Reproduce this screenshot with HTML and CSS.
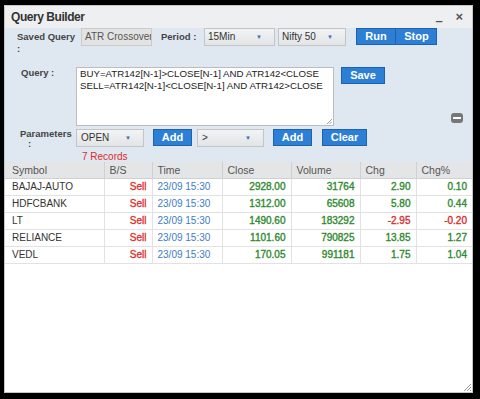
FILE: index.html
```html
<!DOCTYPE html>
<html>
<head>
<meta charset="utf-8">
<link rel="stylesheet" href="styles.css">
</head>
<body>
<div class="window">
  <div class="titlebar">
    <span class="title">Query Builder</span>
    <span class="tb-min">–</span>
    <span class="tb-close">×</span>
  </div>
  <div class="form">
    <div class="row row1">
      <div class="label lbl-saved">Saved Query<br>:</div>
      <div class="input-ro">ATR Crossover</div>
      <div class="label lbl-period">Period :</div>
      <div class="select s-period">15Min<span class="arrow">▼</span></div>
      <div class="select s-index">Nifty 50<span class="arrow">▼</span></div>
      <div class="btn-group">
        <button class="btn btn-run">Run</button><button class="btn btn-stop">Stop</button>
      </div>
    </div>
    <div class="row row-query">
      <div class="label lbl-query">Query :</div>
      <div class="textarea">BUY=ATR142[N-1]&gt;CLOSE[N-1] AND ATR142&lt;CLOSE<br>SELL=ATR142[N-1]&lt;CLOSE[N-1] AND ATR142&gt;CLOSE
        <svg class="ta-grip" width="5" height="5" viewBox="0 0 5 5"><path d="M5 0 L0 5 M5 2.5 L2.5 5" stroke="#888" stroke-width="0.8"/></svg>
      </div>
      <button class="btn btn-save">Save</button>
      <span class="collapse"><span class="collapse-bar"></span></span>
    </div>
    <div class="row row-params">
      <div class="label lbl-params">Parameters<br><span class="colon">:</span></div>
      <div class="select s-field">OPEN<span class="arrow">▼</span></div>
      <button class="btn btn-add">Add</button>
      <div class="select s-op">&gt;<span class="arrow">▼</span></div>
      <button class="btn btn-add2">Add</button>
      <button class="btn btn-clear">Clear</button>
    </div>
    <div class="records">7 Records</div>
  </div>
  <div class="grid">
    <table>
      <colgroup>
        <col class="c-sym"><col class="c-bs"><col class="c-time"><col class="c-close"><col class="c-vol"><col class="c-chg"><col class="c-pct">
      </colgroup>
      <thead>
        <tr><th>Symbol</th><th>B/S</th><th>Time</th><th>Close</th><th>Volume</th><th>Chg</th><th>Chg%</th></tr>
      </thead>
      <tbody>
        <tr><td class="sym">BAJAJ-AUTO</td><td class="bs">Sell</td><td class="time">23/09 15:30</td><td class="num up">2928.00</td><td class="num up">31764</td><td class="num up">2.90</td><td class="num up">0.10</td></tr>
        <tr><td class="sym">HDFCBANK</td><td class="bs">Sell</td><td class="time">23/09 15:30</td><td class="num up">1312.00</td><td class="num up">65608</td><td class="num up">5.80</td><td class="num up">0.44</td></tr>
        <tr><td class="sym">LT</td><td class="bs">Sell</td><td class="time">23/09 15:30</td><td class="num up">1490.60</td><td class="num up">183292</td><td class="num down">-2.95</td><td class="num down">-0.20</td></tr>
        <tr><td class="sym">RELIANCE</td><td class="bs">Sell</td><td class="time">23/09 15:30</td><td class="num up">1101.60</td><td class="num up">790825</td><td class="num up">13.85</td><td class="num up">1.27</td></tr>
        <tr><td class="sym">VEDL</td><td class="bs">Sell</td><td class="time">23/09 15:30</td><td class="num up">170.05</td><td class="num up">991181</td><td class="num up">1.75</td><td class="num up">1.04</td></tr>
      </tbody>
    </table>
    <svg class="win-grip" width="8" height="8" viewBox="0 0 8 8"><path d="M8 1 L1 8 M8 4 L4 8 M8 7 L7 8" stroke="#999" stroke-width="1"/></svg>
  </div>
</div>
</body>
</html>
```

FILE: styles.css
```css
html, body {
  margin: 0;
  padding: 0;
}
body {
  background: #000;
  width: 480px;
  height: 399px;
  overflow: hidden;
  font-family: "Liberation Sans", Arial, sans-serif;
  font-size: 10px;
  color: #333;
}
.window {
  margin: 5px 0 0 4px;
  width: 469px;
  height: 388px;
  box-sizing: border-box;
  border: 1px solid #c6c6c6;
  background: #fff;
  display: flex;
  flex-direction: column;
  position: relative;
}
.titlebar {
  height: 22px;
  background: #eeeff1;
  display: flex;
  align-items: center;
  padding-left: 6px;
  flex: none;
}
.title {
  font-size: 12px;
  font-weight: bold;
  letter-spacing: -0.45px;
  color: #333;
  flex: 1;
}
.tb-min {
  font-size: 13px;
  font-weight: bold;
  color: #555;
  margin-top: 6px;
  width: 10px;
}
.tb-close {
  font-size: 13px;
  font-weight: bold;
  color: #555;
  margin-left: 10px;
  margin-right: 9px;
  margin-top: -2px;
}
.form {
  background: #dfe8f1;
  padding-left: 12px;
  flex: none;
}
.row {
  display: flex;
  align-items: flex-start;
}
.label {
  color: #444;
  font-weight: bold;
  font-size: 9.5px;
  line-height: 12px;
}
.lbl-saved {
  width: 64px;
  padding-top: 3px;
}
.input-ro {
  width: 71px;
  height: 18px;
  box-sizing: border-box;
  background: #e3e3e3;
  border: 1px solid #cbcbcb;
  color: #555;
  font-size: 10px;
  line-height: 16px;
  padding-left: 3px;
  white-space: nowrap;
  overflow: hidden;
}
.lbl-period {
  width: 43px;
  margin-left: 9px;
  padding-top: 3px;
}
.select {
  height: 18px;
  box-sizing: border-box;
  background: linear-gradient(#f2f3f4, #e2e4e6);
  border: 1px solid #c2c4c6;
  color: #333;
  font-size: 10px;
  line-height: 16px;
  padding-left: 3px;
  position: relative;
}
.arrow {
  position: absolute;
  right: 12px;
  top: 0;
  font-size: 6px;
  color: #3a6fb0;
}
.s-period { width: 71px; }
.s-index { width: 68px; margin-left: 3px; }
.btn-group {
  display: flex;
  margin-left: 10px;
}
.btn {
  height: 17px;
  box-sizing: border-box;
  background: #2c7fd5;
  border: 1px solid #1d62ad;
  color: #fff;
  font-family: "Liberation Sans", Arial, sans-serif;
  font-size: 11px;
  font-weight: bold;
  line-height: 15px;
  padding: 0;
  text-align: center;
}
.btn-run { width: 40px; }
.btn-stop { width: 41px; border-left-color: #2c7fd5; }
.row-query {
  margin-top: 12px;
}
.lbl-query {
  width: 55px;
  padding-left: 4px;
}
.textarea {
  width: 258px;
  height: 59px;
  box-sizing: border-box;
  background: #fff;
  border: 1px solid #b9bdc2;
  font-size: 9.7px;
  line-height: 12px;
  color: #222;
  padding-left: 3px;
  white-space: nowrap;
  position: relative;
}
.ta-grip {
  position: absolute;
  right: 1px;
  bottom: 1px;
}
.btn-save {
  width: 44px;
  margin-left: 7px;
}
.collapse {
  align-self: flex-end;
  margin-left: auto;
  margin-right: 9px;
  margin-bottom: 3px;
  width: 12px;
  height: 10px;
  background: #777;
  border-radius: 3px;
  display: flex;
  align-items: center;
  justify-content: center;
}
.collapse-bar {
  width: 8px;
  height: 2px;
  background: #fff;
}
.row-params {
  margin-top: 3px;
}
.lbl-params {
  width: 56px;
  padding-left: 3px;
  line-height: 10px;
}
.colon {
  padding-left: 8px;
}
.s-field { width: 68px; padding-left: 4px; }
.btn-add { width: 39px; margin-left: 9px; }
.s-op { width: 67px; margin-left: 5px; padding-left: 4px; }
.btn-add2 { width: 39px; margin-left: 9px; }
.btn-clear { width: 45px; margin-left: 10px; }
.records {
  color: #e02a2a;
  font-size: 10px;
  line-height: 11px;
  padding-top: 2px;
  padding-left: 65px;
}
.grid {
  flex: 1;
  background: #fff;
  position: relative;
}
table {
  width: 467px;
  border-collapse: collapse;
  table-layout: fixed;
  font-size: 10px;
}
.c-sym { width: 99px; }
.c-bs { width: 48px; }
.c-time { width: 70px; }
.c-close { width: 69px; }
.c-vol { width: 69px; }
.c-chg { width: 56px; }
.c-pct { width: 56px; }
th {
  height: 16px;
  box-sizing: border-box;
  background: #e4e5e6;
  border: 1px solid #cfd0d1;
  border-top: none;
  color: #555;
  font-weight: normal;
  font-size: 10.5px;
  text-align: left;
  padding: 0 0 0 5px;
}
th:first-child { padding-left: 7px; border-left: none; }
th:last-child { border-right: none; }
td {
  height: 17px;
  box-sizing: border-box;
  border: 1px solid #e2e2e2;
  padding: 0 5px;
  white-space: nowrap;
}
td:first-child { border-left: none; padding-left: 7px; }
td:last-child { border-right: none; }
.sym { color: #333; }
.bs { color: #e02a2a; text-align: right; -webkit-text-stroke: 0.3px currentColor; }
.time { color: #3c7cc6; }
.num { text-align: right; -webkit-text-stroke: 0.35px currentColor; }
.up { color: #2e8a2e; }
.down { color: #e02a2a; }
.win-grip {
  position: absolute;
  right: 1px;
  bottom: 1px;
}
```
